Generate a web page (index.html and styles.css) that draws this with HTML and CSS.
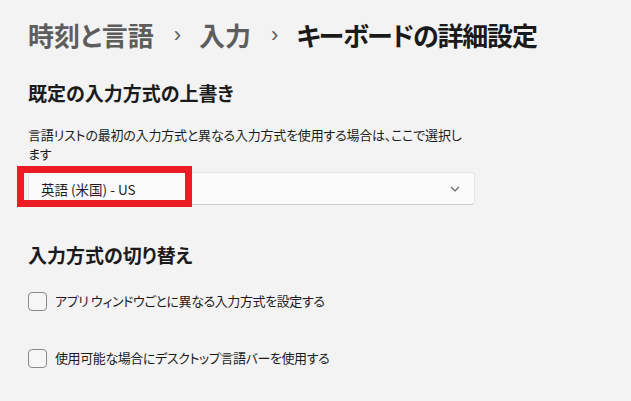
FILE: index.html
```html
<!DOCTYPE html>
<html lang="ja">
<head>
    <meta charset="UTF-8">
    <meta name="viewport" content="width=device-width, initial-scale=1.0">
    <title>キーボードの詳細設定</title>
    <link rel="stylesheet" href="styles.css">
</head>
<body>
    <div class="page">
        <!-- Breadcrumb -->
        <h1 class="breadcrumb">
            <span class="crumb">時刻と言語</span>
            <span class="sep">&#8250;</span>
            <span class="crumb">入力</span>
            <span class="sep">&#8250;</span>
            <span class="current">キーボードの詳細設定</span>
        </h1>

        <!-- Override default input method -->
        <h2 class="section-title">既定の入力方式の上書き</h2>
        <p class="desc">言語リストの最初の入力方式と異なる入力方式を使用する場合は、ここで選択します</p>

        <div class="select-wrap">
            <div class="select">
                <span>英語 (米国) - US</span>
                <svg class="chevron" width="10" height="6" viewBox="0 0 10 6">
                    <polyline points="1,1 5,5 9,1" fill="none" stroke="#5f5f5f" stroke-width="1.1"/>
                </svg>
            </div>
            <div class="highlight"></div>
        </div>

        <!-- Switching input methods -->
        <h2 class="section-title second">入力方式の切り替え</h2>

        <label class="check-row">
            <span class="box"></span>
            <span>アプリ&nbsp;ウィンドウごとに異なる入力方式を設定する</span>
        </label>
        <label class="check-row">
            <span class="box"></span>
            <span>使用可能な場合にデスクトップ言語バーを使用する</span>
        </label>
    </div>
</body>
</html>
```

FILE: styles.css
```css
body {
    margin: 0;
    background-color: #f3f3f3;
    color: #1b1b1b;
    font-family: "Noto Sans CJK JP", "Noto Sans", sans-serif;
    font-feature-settings: "palt";
}

.page {
    padding: 17px 28px 0 28px;
}

/* Breadcrumb header */
.breadcrumb {
    margin: 0;
    display: flex;
    align-items: center;
    font-size: 26px;
    line-height: 36px;
    font-weight: 600;
}

.crumb {
    color: #5d5d5d;
}

.sep {
    color: #5d5d5d;
    font-family: "Liberation Sans", sans-serif;
    font-weight: 400;
    font-size: 22px;
    margin: 0 18px 0 20px;
}

.current {
    color: #1a1a1a;
    letter-spacing: -1.2px;
}

/* Section titles */
.section-title {
    margin: 26px 0 0 0;
    font-size: 19px;
    line-height: 28px;
    font-weight: 600;
}

.section-title.second {
    margin-top: 36px;
}

.desc {
    margin: 18px 0 0 0;
    width: 445px;
    font-size: 13px;
    line-height: 19px;
    letter-spacing: -0.2px;
}

/* Dropdown */
.select-wrap {
    position: relative;
    width: 447px;
    margin-top: 9px;
}

.select {
    display: flex;
    align-items: center;
    justify-content: space-between;
    height: 31px;
    padding: 0 14px 0 12px;
    background-color: #fbfbfb;
    border: 1px solid #e5e5e5;
    border-bottom-color: #cccccc;
    border-radius: 4px;
    font-size: 13.5px;
}

.highlight {
    position: absolute;
    left: -11px;
    top: -6px;
    width: 161px;
    height: 27px;
    border: 7px solid #ec1c24;
}

/* Checkboxes */
.check-row {
    display: flex;
    align-items: center;
    gap: 8px;
    font-size: 13px;
    line-height: 20px;
    letter-spacing: -0.4px;
    margin-top: 22px;
}

.check-row + .check-row {
    margin-top: 37px;
}

.box {
    width: 17px;
    height: 17px;
    border: 1px solid #8a8a8a;
    border-radius: 4px;
    background-color: #f6f6f6;
}
```
